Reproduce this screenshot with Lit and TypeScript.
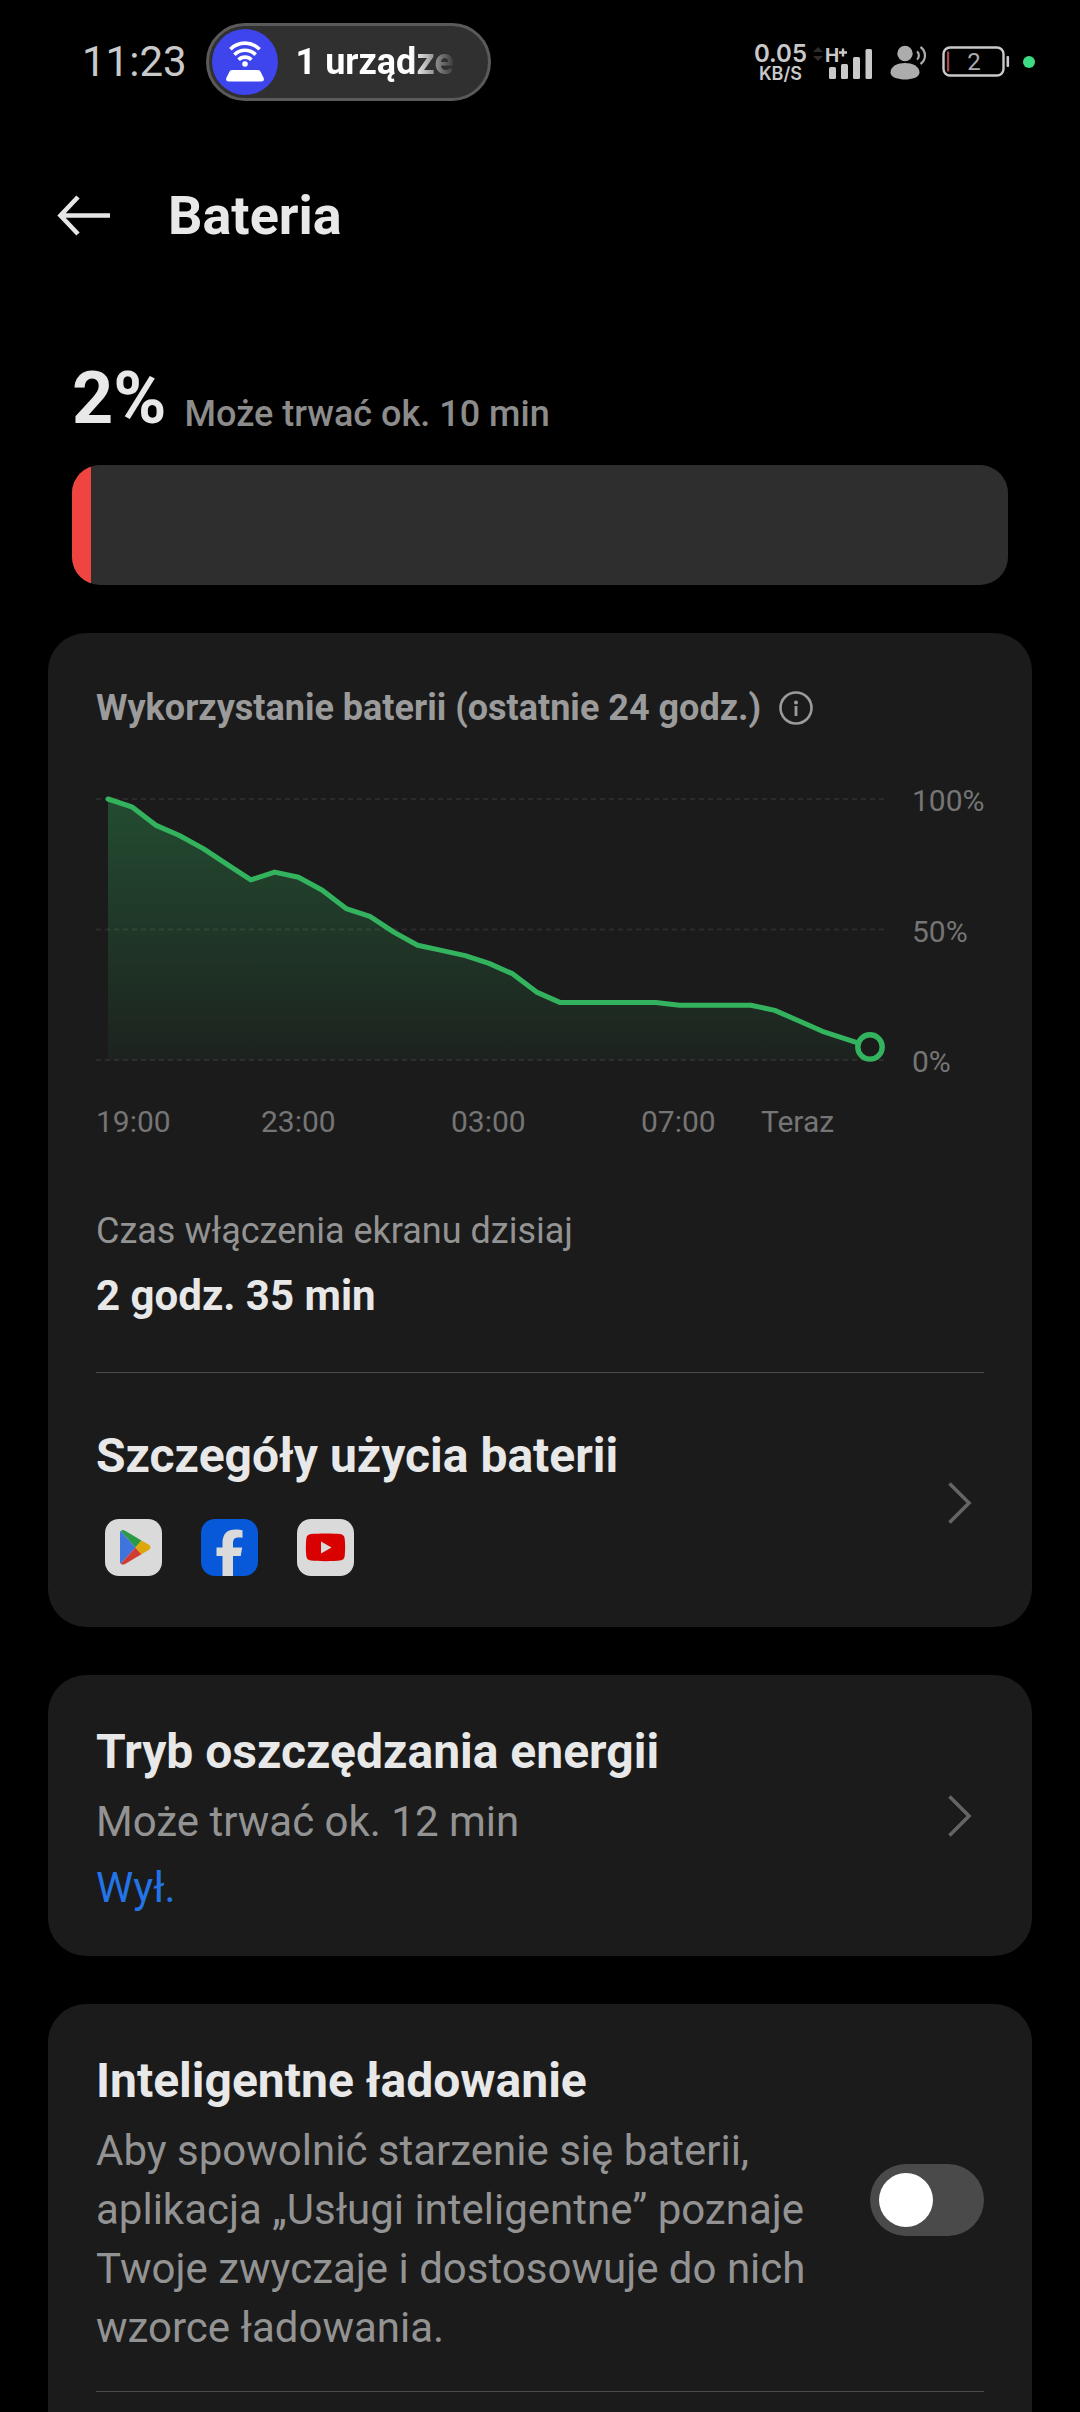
import { LitElement, html, svg, css } from "lit";
import { customElement, property, state } from "lit/decorators.js";

/* Battery level, one sample every half hour, oldest first. */
const LEVELS = [
  100, 97, 90, 86, 81, 75, 69, 72, 70, 65, 58, 55, 49, 44, 42, 40, 37, 33, 26,
  22, 22, 22, 22, 22, 21, 21, 21, 21, 19, 15, 11, 8, 5,
];

@customElement("status-bar")
export class StatusBar extends LitElement {
  static styles = css`
    :host {
      display: flex;
      align-items: center;
      height: 124px;
      padding: 0 45px 0 82px;
      color: #c9c9c9;
    }
    svg {
      display: block;
      flex: none;
    }
    .time {
      font-size: 42px;
      line-height: 60px;
    }
    .pill {
      display: flex;
      align-items: center;
      box-sizing: border-box;
      width: 285px;
      height: 78px;
      margin-left: 19px;
      padding: 0 32px 0 3px;
      border: 3px solid #5a5a5a;
      border-radius: 39px;
      background: #303030;
      color: #ffffff;
    }
    .pill-text {
      flex: 1;
      margin-left: 18px;
      overflow: hidden;
      white-space: nowrap;
      font-size: 36px;
      font-weight: 700;
      line-height: 48px;
      mask-image: linear-gradient(to right, #000 72%, transparent 100%);
    }
    .icons {
      display: flex;
      align-items: center;
      margin-left: auto;
    }
    .speed {
      display: flex;
      flex-direction: column;
      align-items: center;
      padding-top: 4px;
      font-family: Inter, Roboto, sans-serif;
      font-weight: 600;
    }
    .rate {
      font-size: 24px;
      line-height: 20px;
    }
    .unit {
      font-size: 18px;
      line-height: 20px;
    }
    .signal {
      margin-left: 5px;
    }
    .person {
      margin-left: 17px;
    }
    .battery {
      margin-left: 15px;
    }
    .battery-text {
      font-family: Roboto, sans-serif;
      font-size: 24px;
    }
    .network-text {
      font-family: Inter, Roboto, sans-serif;
      font-size: 19px;
      font-weight: 700;
    }
    .dot {
      width: 12px;
      height: 12px;
      margin-left: 13px;
      border-radius: 50%;
      background: #3ddc84;
    }
  `;

  render() {
    return html`
      <span class="time">11:23</span>
      <div class="pill">
        <svg width="66" height="66" viewBox="0 0 66 66" aria-hidden="true">
          <circle cx="33" cy="33" r="33" fill="#3f45ec" />
          <g fill="none" stroke="#fff" stroke-width="3.6">
            <path d="M18.4 20.2a20.6 20.6 0 0 1 29.2 0" />
            <path d="M22.4 25.7a15 15 0 0 1 21.2 0" />
            <path d="M26.6 30.8a9 9 0 0 1 12.8 0" />
          </g>
          <circle cx="33" cy="35" r="2.8" fill="#fff" />
          <path
            fill="#fff"
            d="M20 41h26q2 0 2.700 2l3 6q1 3.500-2.700 3.500H17q-3.700 0-2.700-3.500l3-6q.7-2 2.700-2z"
          />
        </svg>
        <span class="pill-text">1 urządze</span>
      </div>
      <div class="icons">
        <div class="speed">
          <span class="rate">0.05</span>
          <span class="unit">KB/S</span>
        </div>
        <svg class="signal" width="61" height="36" viewBox="0 0 61 36" aria-label="H+">
          <path d="M1 8l5-5 5 5zM1 12l5 5 5-5z" fill="#2c2c2c" />
          <text class="network-text" x="13" y="18" fill="#c9c9c9">H</text>
          <path d="M27 8.500h8M31 4.500v8" stroke="#c9c9c9" stroke-width="2.400" />
          <g fill="#c9c9c9">
            <rect x="17" y="23" width="7" height="12" rx="1.500" />
            <rect x="29" y="20" width="7" height="15" rx="1.500" />
            <rect x="41" y="13" width="7" height="22" rx="1.500" />
            <rect x="53.500" y="5" width="6.500" height="30" rx="1.500" />
          </g>
        </svg>
        <svg class="person" width="37" height="36" viewBox="0 0 37 36" aria-hidden="true">
          <g fill="#acacac">
            <circle cx="15" cy="9.500" r="7.700" />
            <path d="M.5 28.500C.5 22 8 19 15 19s14.500 3 14.500 9.500c0 5-8 7-14.500 7s-14.500-2-14.500-7z" />
          </g>
          <g fill="none" stroke="#acacac" stroke-width="2.200">
            <path d="M27 7.500c2.500 1.500 2.500 6.500 0 8" />
            <path d="M30.500 3c6 4.500 6 12.500 0 17" />
          </g>
        </svg>
        <svg class="battery" width="68" height="32" viewBox="0 0 68 32" aria-hidden="true">
          <rect x="1.500" y="1.500" width="60" height="28" rx="6.500" fill="none" stroke="#c9c9c9" stroke-width="2.400" />
          <rect x="5" y="5.500" width="2.200" height="20" fill="#a8474c" />
          <rect x="64.500" y="10" width="2.600" height="11" rx="1" fill="#c9c9c9" />
          <text class="battery-text" x="32" y="24" text-anchor="middle" fill="#acacac">2</text>
        </svg>
        <span class="dot"></span>
      </div>
    `;
  }
}

@customElement("level-chart")
export class LevelChart extends LitElement {
  @property({ attribute: false }) levels: number[] = [];

  static styles = css`
    :host {
      display: block;
      color: #757575;
      font-size: 30px;
      line-height: 42px;
    }
    .plot-row {
      display: grid;
      grid-template-columns: minmax(0, 1fr) 72px;
      gap: 28px;
    }
    .plot {
      display: block;
      width: 100%;
      overflow: visible;
    }
    .scale {
      display: flex;
      flex-direction: column;
      justify-content: space-between;
      white-space: nowrap;
    }
    .hours {
      display: grid;
      grid-template-columns: 165fr 190fr 190fr 120fr 123fr;
      margin: 18px 100px 0 0;
      white-space: nowrap;
    }
  `;

  render() {
    const top = 19;
    const base = 280;
    const left = 12;
    const right = 774;
    const step = (right - left) / (this.levels.length - 1);
    const points = this.levels.map((level, i) => ({
      x: left + i * step,
      y: base - (level / 100) * (base - top),
    }));
    const line = points.map((p) => `${p.x.toFixed(1)},${p.y.toFixed(1)}`).join(" ");
    const last = points[points.length - 1];
    return html`
      <div class="plot-row">
        <svg class="plot" viewBox="0 0 788 303" role="img" aria-label="Wykorzystanie baterii">
          <defs>
            <linearGradient id="fade" x1="0" y1=${top} x2="0" y2=${base} gradientUnits="userSpaceOnUse">
              <stop offset="0" stop-color="#34b35f" stop-opacity="0.32" />
              <stop offset="1" stop-color="#34b35f" stop-opacity="0.05" />
            </linearGradient>
          </defs>
          <polygon fill="url(#fade)" points="${left},${base} ${line} ${right},${base}" />
          ${[top, (top + base) / 2, base].map(
            (y) => svg`<line x1="0" x2="788" y1=${y} y2=${y} stroke="#fff" stroke-opacity="0.07" stroke-width="2" stroke-dasharray="5 4" />`
          )}
          <polyline fill="none" stroke="#34b35f" stroke-width="5" stroke-linejoin="round" stroke-linecap="round" points=${line} />
          <circle cx=${last.x} cy=${last.y} r="12.200" fill="#1b1b1b" stroke="#34b35f" stroke-width="5.400" />
        </svg>
        <div class="scale"><span>100%</span><span>50%</span><span>0%</span></div>
      </div>
      <div class="hours">
        <span>19:00</span><span>23:00</span><span>03:00</span><span>07:00</span><span>Teraz</span>
      </div>
    `;
  }
}

const chevron = html`<svg
  class="chevron"
  width="26"
  height="44"
  viewBox="0 0 26 44"
  aria-hidden="true"
>
  <path d="M2.500 2.500L22 22 2.500 41.500" fill="none" stroke="#656565" stroke-width="3.600" />
</svg>`;

const playIcon = html`<svg width="57" height="57" viewBox="0 0 57 57" role="img" aria-label="Google Play">
  <rect width="57" height="57" rx="14" fill="#dadada" />
  <path d="M15 13.500v29.500q0 1 .7 1.700L30.500 28.500 15.700 12q-.7.700-.7 1.500z" fill="#3f74dc" />
  <path d="M15.700 12q1.500-1.500 4-.5L36.500 21.500 30.500 28.500z" fill="#2b9a48" />
  <path d="M15.700 44.700q1.500 1.500 4 .5L36.500 35.300 30.500 28.500z" fill="#cf3d32" />
  <path d="M36.500 21.500l7.500 4.300q3 2.400 0 5L36.500 35.300l-6-6.800z" fill="#dda70c" />
</svg>`;

const facebookIcon = html`<svg width="57" height="57" viewBox="0 0 57 57" role="img" aria-label="Facebook">
  <rect width="57" height="57" rx="14" fill="#0759d9" />
  <path
    d="M21.500 57V37H15.500v-8.500h6v-4.200c0-9.500 4.500-13.800 13.300-13.800 2.500 0 5.200.3 6.700.700v7.600c-1-.1-2.200-.2-3.500-.2-5 0-6 2-6 6.200v3.700h9.200L39.700 37H32v20z"
    fill="#dadada"
  />
</svg>`;

const youtubeIcon = html`<svg width="57" height="57" viewBox="0 0 57 57" role="img" aria-label="YouTube">
  <rect width="57" height="57" rx="14" fill="#dadada" />
  <path
    d="M28.500 14.500c6 0 11.500.2 14.500.6 3 .4 4.400 1.900 4.700 4.600.6 5.800.6 11.500 0 17.300-.3 2.700-1.700 4.200-4.700 4.600-6 .7-23 .7-29 0-3-.4-4.400-1.900-4.700-4.600-.6-5.800-.6-11.500 0-17.300.3-2.700 1.700-4.200 4.700-4.600 3-.4 8.500-.6 14.500-.6z"
    fill="#d90000"
  />
  <path d="M24 22.500l10.500 6-10.500 6z" fill="#dadada" />
</svg>`;

@customElement("app-root")
export class AppRoot extends LitElement {
  @state() private charge = 2;
  @state() private smartCharging = false;

  static styles = css`
    :host {
      display: flex;
      flex-direction: column;
      box-sizing: border-box;
      min-height: 100vh;
      background: #000000;
      color: #e8e8e8;
      font-family: Roboto, "Noto Sans", sans-serif;
    }
    h1,
    h2,
    p {
      margin: 0;
    }
    svg {
      display: block;
      flex: none;
    }
    a {
      color: inherit;
      text-decoration: none;
    }
    button {
      padding: 0;
      border: 0;
      background: none;
      color: inherit;
      cursor: pointer;
    }
    .header {
      display: flex;
      align-items: center;
      height: 184px;
      padding: 0 56px;
    }
    .header h1 {
      margin-left: 56px;
      font-size: 54px;
      line-height: 72px;
    }
    .summary {
      padding: 48px 72px 0;
    }
    .summary-text {
      display: flex;
      align-items: flex-end;
      gap: 18px;
    }
    .percent {
      font-size: 72px;
      font-weight: 700;
      line-height: 85px;
    }
    .remaining {
      color: #8c8c8c;
      font-size: 36px;
      font-weight: 500;
      line-height: 54px;
    }
    .meter {
      height: 120px;
      margin-top: 24px;
      overflow: hidden;
      border-radius: 28px;
      background: #2e2e2e;
    }
    .meter-fill {
      height: 100%;
      background: #f04440;
    }
    .cards {
      display: flex;
      flex: 1;
      flex-direction: column;
      gap: 48px;
      padding: 48px 48px 0;
    }
    .card {
      padding: 0 48px;
      border-radius: 38px;
      background: #1b1b1b;
    }
    .card-last {
      flex: 1;
      border-radius: 38px 38px 0 0;
    }
    .usage-head {
      display: flex;
      align-items: center;
      gap: 18px;
      margin: 48px 0 45px;
      color: #9b9b9b;
      font-size: 36px;
      line-height: 54px;
    }
    .usage-head h2 {
      font-size: 36px;
    }
    .usage {
      display: flow-root;
    }
    .caption {
      margin-top: 61px;
      color: #939393;
      font-size: 36px;
      line-height: 54px;
    }
    .screen-time {
      margin-top: 8px;
      font-size: 42px;
      font-weight: 700;
      line-height: 60px;
    }
    .divider {
      height: 1px;
      margin: 46px 0 0;
      border: 0;
      background: #4c4c4c;
    }
    .divider-tight {
      margin-top: -5px;
    }
    .row {
      display: flex;
      align-items: center;
      gap: 48px;
    }
    .row-text {
      flex: 1;
      min-width: 0;
      padding: 47px 0 39px;
    }
    .row-details {
      margin-top: 6px;
    }
    .row-details .row-text {
      padding: 47px 0 51px;
    }
    .title {
      display: block;
      font-size: 48px;
      font-weight: 700;
      line-height: 60px;
    }
    .text {
      display: block;
      margin-top: 10px;
      color: #939393;
      font-size: 42px;
      line-height: 59px;
    }
    .value {
      display: block;
      margin-top: 7px;
      color: #2374e6;
      font-size: 42px;
      line-height: 59px;
    }
    .chevron {
      margin-right: 11px;
    }
    .apps {
      display: flex;
      gap: 39px;
      margin-top: 33px;
      padding-left: 9px;
    }
    .switch {
      flex: none;
      appearance: none;
      box-sizing: border-box;
      width: 114px;
      height: 72px;
      margin: 0;
      padding: 9px;
      border-radius: 36px;
      background: #4a4a4a;
      cursor: pointer;
    }
    .switch::before {
      display: block;
      width: 54px;
      height: 54px;
      border-radius: 50%;
      background: #ffffff;
      content: "";
    }
    .switch:checked {
      background: #2374e6;
    }
    .switch:checked::before {
      margin-left: auto;
    }
  `;

  private toggleSmart(event: Event) {
    this.smartCharging = (event.target as HTMLInputElement).checked;
  }

  render() {
    return html`
      <status-bar></status-bar>
      <header class="header">
        <button aria-label="Wstecz">
          <svg width="56" height="44" viewBox="0 0 56 44" aria-hidden="true">
            <path d="M22 3L4.500 21.500 22 40M4.500 21.500H54" fill="none" stroke="#e6e6e6" stroke-width="4.600" />
          </svg>
        </button>
        <h1>Bateria</h1>
      </header>

      <section class="summary">
        <div class="summary-text">
          <span class="percent">${this.charge}%</span>
          <span class="remaining">Może trwać ok. 10 min</span>
        </div>
        <div class="meter">
          <div class="meter-fill" style="width: ${this.charge}%"></div>
        </div>
      </section>

      <main class="cards">
        <section class="card usage">
          <div class="usage-head">
            <h2>Wykorzystanie baterii (ostatnie 24 godz.)</h2>
            <button aria-label="Informacje">
              <svg width="34" height="34" viewBox="0 0 34 34" aria-hidden="true">
                <circle cx="17" cy="17" r="15.500" fill="none" stroke="#9b9b9b" stroke-width="2.600" />
                <circle cx="17" cy="11.500" r="2" fill="#9b9b9b" />
                <path d="M17 15v10" stroke="#9b9b9b" stroke-width="2.800" />
              </svg>
            </button>
          </div>
          <level-chart .levels=${LEVELS}></level-chart>
          <p class="caption">Czas włączenia ekranu dzisiaj</p>
          <p class="screen-time">2 godz. 35 min</p>
          <hr class="divider" />
          <a class="row row-details" href="#details">
            <div class="row-text">
              <span class="title">Szczegóły użycia baterii</span>
              <div class="apps">${playIcon}${facebookIcon}${youtubeIcon}</div>
            </div>
            ${chevron}
          </a>
        </section>

        <a class="card row" href="#saver">
          <div class="row-text">
            <span class="title">Tryb oszczędzania energii</span>
            <span class="text">Może trwać ok. 12 min</span>
            <span class="value">Wył.</span>
          </div>
          ${chevron}
        </a>

        <section class="card card-last">
          <div class="row">
            <label class="row-text" for="smart">
              <span class="title">Inteligentne ładowanie</span>
              <span class="text"
                >Aby spowolnić starzenie się baterii, aplikacja „Usługi inteligentne”
                poznaje Twoje zwyczaje i dostosowuje do nich wzorce ładowania.</span
              >
            </label>
            <input
              id="smart"
              class="switch"
              type="checkbox"
              role="switch"
              .checked=${this.smartCharging}
              @change=${this.toggleSmart}
            />
          </div>
          <hr class="divider divider-tight" />
        </section>
      </main>
    `;
  }
}
